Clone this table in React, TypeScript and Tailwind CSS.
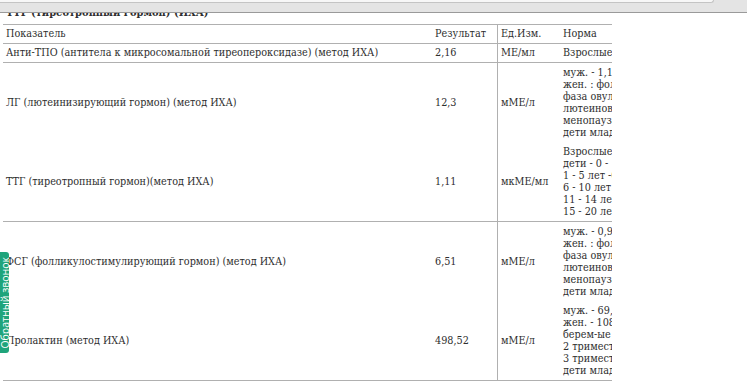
import React from "react";

const font = { fontFamily: '"DejaVu Serif Condensed", "DejaVu Serif", serif' };

type Row = { name: string; result: string; unit: string; norm: string[]; tall?: boolean; border?: boolean };

const rows: Row[] = [
  { name: "Анти-ТПО (антитела к микросомальной тиреопероксидазе) (метод ИХА)", result: "2,16", unit: "МЕ/мл", norm: ["Взрослые - 0 - 5,6"], border: true },
  { name: "ЛГ (лютеинизирующий гормон) (метод ИХА)", result: "12,3", unit: "мМЕ/л", norm: ["муж. - 1,14 - 8,75", "жен. : фолликулярная фаза 2,39 - 6,6", "фаза овуляции 9,06 - 74,24", "лютеиновая фаза 0,9 - 9,33", "менопауза 10,39 - 64,57", "дети младше 12 лет - 0,3 - 1,1"], tall: true },
  { name: "ТТГ (тиреотропный гормон)(метод ИХА)", result: "1,11", unit: "мкМЕ/мл", norm: ["Взрослые - 0,35 - 4,94", "дети - 0 - 1 год - 1,36 - 8,8", "1 - 5 лет -0,85 - 6,5", "6 - 10 лет - 0,28 - 4,3", "11 - 14 лет - 0,57 - 3,6", "15 - 20 лет - 0,6 - 4,5"], tall: true, border: true },
  { name: "ФСГ (фолликулостимулирующий гормон) (метод ИХА)", result: "6,51", unit: "мМЕ/л", norm: ["муж. - 0,95 - 11,95", "жен. : фолликулярная фаза 3,03 - 8,08", "фаза овуляции 2,55 - 16,69", "лютеиновая фаза 1,38 - 5,47", "менопауза 26,72 - 133,41", "дети младше 12 лет - 0,5 - 4,5"], tall: true },
  { name: "Пролактин (метод ИХА)", result: "498,52", unit: "мМЕ/л", norm: ["муж. - 69,3 - 396,5", "жен. - 108,8 - 557,1", "берем-ые 1 триместр - 206 - 4420", "2 триместр - 1135 - 7280", "3 триместр - 1575 - 9100", "дети младше 12 лет - 50 - 400"], tall: true, border: true },
];

function Cell({ children, className = "" }: { children: React.ReactNode; className?: string }) {
  return <div className={`flex items-center whitespace-nowrap ${className}`}>{children}</div>;
}

export default function App() {
  return (
    <div className="relative h-[384px] w-[747px] overflow-hidden bg-white text-[#2e2e2e]" style={font}>
      {/* top fixed bar */}
      <div className="absolute left-0 top-0 z-10 h-[13px] w-full border-b border-[#9a9a9a] bg-[#e4e4e4]">
        <div className="h-[3px] w-[714px] rounded-br-[3px] border-b border-r border-[#c4c4c4] bg-[#f7f7f7]" />
      </div>

      <div className="pl-[3px] pt-[6px]">
        <div className="pl-[3px] text-[11px] font-bold leading-[13px]">ТТГ (тиреотропный гормон) (ИХА)</div>
        <div className="mt-[5px] w-[609px] overflow-hidden border-t border-[#b0b0b0] text-[10.75px] leading-[12px]">
          <div className="grid h-[19px] grid-cols-[428px_66px_62px_53px] border-b border-[#b0b0b0]">
            <Cell className="pl-[3px]">Показатель</Cell>
            <Cell className="pl-[4px]">Результат</Cell>
            <Cell className="border-l border-[#b0b0b0] pl-[3px]">Ед.Изм.</Cell>
            <Cell className="pl-[4px]">Норма</Cell>
          </div>
          {rows.map((r, i) => (
            <div
              key={i}
              className={`grid grid-cols-[428px_66px_62px_53px] ${r.tall ? "h-[79.5px]" : "h-[19px]"} ${r.border ? "border-b border-[#b0b0b0]" : ""}`}
            >
              <Cell className="pl-[3px]">{r.name}</Cell>
              <Cell className="pl-[4px]">{r.result}</Cell>
              <Cell className="border-l border-[#b0b0b0] pl-[3px]">{r.unit}</Cell>
              <div className="flex flex-col justify-center overflow-hidden whitespace-nowrap pl-[4px]">
                {r.norm.map((n, j) => (
                  <div key={j}>{n}</div>
                ))}
              </div>
            </div>
          ))}
        </div>
      </div>

      {/* callback tab */}
      <div className="absolute left-0 top-[252px] z-10 flex h-[101px] w-[9px] items-center justify-center overflow-hidden rounded-r-[3px] bg-[#1fa47b]">
        <span
          className="whitespace-nowrap text-[10.5px] leading-[10px] text-white"
          style={{ writingMode: "vertical-rl", transform: "rotate(180deg)", fontFamily: '"Open Sans", sans-serif' }}
        >
          Обратный звонок
        </span>
      </div>
    </div>
  );
}
